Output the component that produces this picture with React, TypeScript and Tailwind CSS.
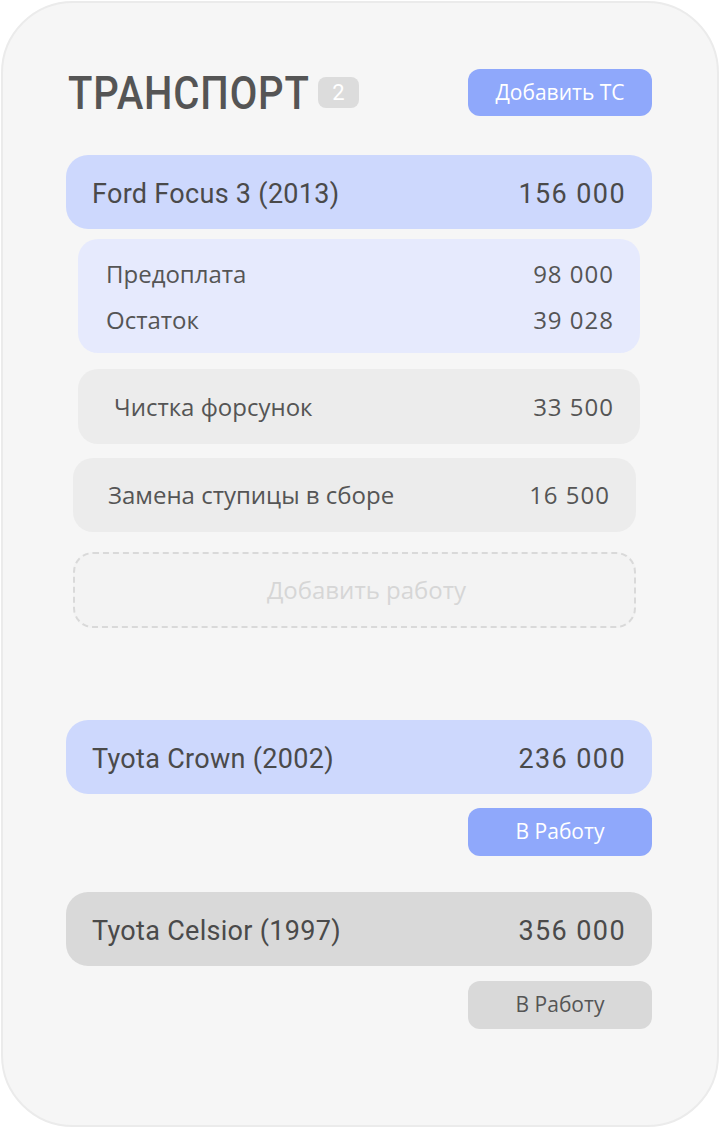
const roboto = { fontFamily: "Roboto, sans-serif" };

type CarProps = {
  name: string;
  price: string;
  tone: "blue" | "gray";
};

function CarRow({ name, price, tone }: CarProps) {
  const bg = tone === "blue" ? "bg-[#cdd8fd]" : "bg-[#d9d9d9]";
  return (
    <div
      className={`flex h-[74px] items-center justify-between rounded-[22px] pl-[26px] pr-[26px] pt-[5px] text-[27px] text-[#4a4a4a] ${bg}`}
      style={roboto}
    >
      <span className="tracking-[0.3px]">{name}</span>
      <span className="tracking-[1.4px]">{price}</span>
    </div>
  );
}

function ToWorkButton({ tone }: { tone: "blue" | "gray" }) {
  const cls = tone === "blue" ? "bg-[#8fa8fb] text-white" : "bg-[#d9d9d9] text-[#555555]";
  return (
    <button
      type="button"
      className={`flex h-[48px] w-[184px] items-center justify-center self-end rounded-[12px] text-[21px] ${cls}`}
    >
      В Работу
    </button>
  );
}

function SubRow({ label, value }: { label: string; value: string }) {
  return (
    <>
      <span>{label}</span>
      <span className="tracking-[1px]">{value}</span>
    </>
  );
}

export default function App() {
  return (
    <div className="h-[1128px] w-[720px] bg-white p-[1px]">
      <div
        className="flex h-[1126px] flex-col rounded-[72px] border-2 border-[#ebebeb] bg-[#f6f6f6] pl-[63px] pr-[65px] pt-[66px]"
        style={{ fontFamily: '"Open Sans", sans-serif' }}
      >
        <header className="flex h-[47px] items-center justify-between">
          <div className="flex items-center gap-[14px]">
            <div className="w-[238px] whitespace-nowrap pl-[2px]">
              <h1
                className="inline-block origin-left scale-x-[0.87] text-[46px] font-medium leading-none tracking-[1px] text-[#555555]"
                style={roboto}
              >
                ТРАНСПОРТ
              </h1>
            </div>
            <span
              className="flex h-[31px] w-[41px] items-center justify-center rounded-[8px] bg-[#dcdcdc] text-[22px] text-white"
              style={roboto}
            >
              2
            </span>
          </div>
          <button
            type="button"
            className="flex h-[47px] w-[184px] items-center justify-center rounded-[12px] bg-[#8fa8fb] text-[21px] text-white"
          >
            Добавить ТС
          </button>
        </header>

        <div className="mt-[39px]">
          <CarRow name="Ford Focus 3 (2013)" price="156 000" tone="blue" />
        </div>

        <div className="mx-[12px] mt-[10px] flex h-[114px] flex-col gap-[18px] rounded-[20px] bg-[#e6eafd] pl-[28px] pr-[26px] pt-[21px] text-[24px] text-[#555555]">
          <div className="flex h-[28px] items-center justify-between">
            <SubRow label="Предоплата" value="98 000" />
          </div>
          <div className="flex h-[28px] items-center justify-between">
            <SubRow label="Остаток" value="39 028" />
          </div>
        </div>

        <div className="mx-[12px] mt-[16px] flex h-[75px] items-center justify-between rounded-[20px] bg-[#ececec] pl-[36px] pr-[26px] text-[24px] text-[#555555]">
          <SubRow label="Чистка форсунок" value="33 500" />
        </div>

        <div className="ml-[7px] mr-[16px] mt-[14px] flex h-[74px] items-center justify-between rounded-[20px] bg-[#ececec] pl-[35px] pr-[26px] text-[24px] text-[#555555]">
          <SubRow label="Замена ступицы в сборе" value="16 500" />
        </div>

        <button
          type="button"
          className="ml-[7px] mr-[16px] mt-[20px] flex h-[76px] items-center justify-center rounded-[20px] border-2 border-dashed border-[#d9d9d9] bg-[#f3f3f3] pl-[24px] text-[24px] text-[#d6d6d6]"
        >
          Добавить работу
        </button>

        <div className="mt-[92px]">
          <CarRow name="Tyota Crown (2002)" price="236 000" tone="blue" />
        </div>
        <div className="mt-[14px] flex flex-col">
          <ToWorkButton tone="blue" />
        </div>

        <div className="mt-[36px]">
          <CarRow name="Tyota Celsior (1997)" price="356 000" tone="gray" />
        </div>
        <div className="mt-[15px] flex flex-col">
          <ToWorkButton tone="gray" />
        </div>
      </div>
    </div>
  );
}
